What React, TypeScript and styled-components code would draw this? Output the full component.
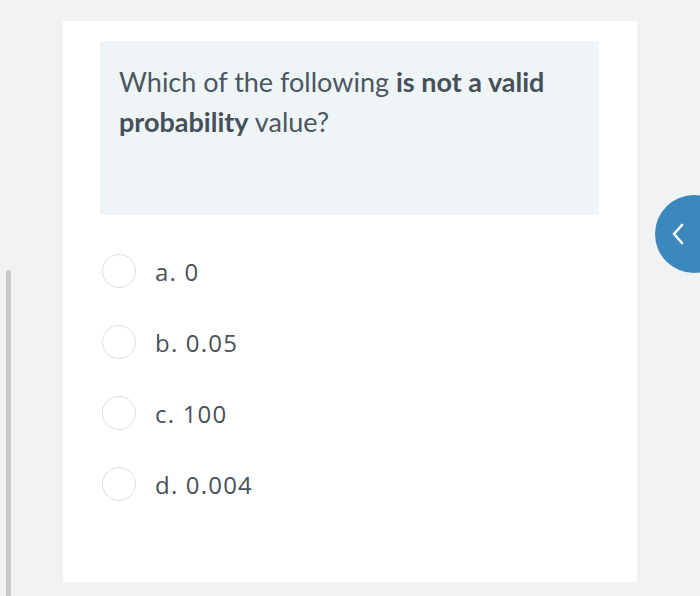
import React from 'react';
import styled, { createGlobalStyle } from 'styled-components';

const GlobalStyle = createGlobalStyle`
  html, body {
    margin: 0;
    padding: 0;
    background: #f1f2f4;
    font-family: Lato, "Open Sans", sans-serif;
  }
`;

const Page = styled.div`
  position: relative;
  width: 700px;
  height: 596px;
  overflow: hidden;
  padding: 21px 0 0 63px;
  box-sizing: border-box;
`;

const Card = styled.div`
  width: 574px;
  height: 561px;
  background: #ffffff;
  padding: 20px 38px 0 37px;
  box-sizing: border-box;
`;

const QuestionBox = styled.div`
  height: 174px;
  background: #eff4f6;
  border-radius: 4px;
  padding: 21px 19px;
  box-sizing: border-box;
  color: #4b5661;
  font-size: 27px;
  line-height: 40px;
`;

const Strong = styled.b`
  font-weight: 700;
  color: #46505b;
`;

const Options = styled.div`
  display: flex;
  flex-direction: column;
  gap: 37px;
  margin-top: 39px;
  padding-left: 2px;
`;

const Option = styled.label`
  display: flex;
  align-items: center;
  gap: 19px;
  color: #4a5159;
  font-family: "Open Sans", sans-serif;
  font-size: 24px;
  letter-spacing: 1.2px;
  cursor: pointer;
`;

const Radio = styled.span`
  width: 34px;
  height: 34px;
  border-radius: 50%;
  border: 1.5px solid #dcdee0;
  box-sizing: border-box;
  background: #fff;
  flex-shrink: 0;
`;

const SideBar = styled.div`
  position: absolute;
  left: 6px;
  top: 270px;
  bottom: 0;
  width: 5px;
  border-radius: 3px 3px 0 0;
  background: #c9c9c9;
`;

const BackButton = styled.button`
  position: absolute;
  left: 655px;
  top: 195px;
  width: 78px;
  height: 78px;
  border-radius: 50%;
  border: none;
  background: #3b88bf;
  padding: 0 0 0 16px;
  display: flex;
  align-items: center;
  cursor: pointer;
`;

const options = ['a. 0', 'b. 0.05', 'c. 100', 'd. 0.004'];

export default function App() {
  return (
    <>
      <GlobalStyle />
      <Page>
        <Card>
          <QuestionBox>
            Which of the following <Strong>is not a valid</Strong>{' '}
            <Strong>probability</Strong> value?
          </QuestionBox>
          <Options>
            {options.map((o) => (
              <Option key={o}>
                <Radio />
                {o}
              </Option>
            ))}
          </Options>
        </Card>
        <SideBar />
        <BackButton aria-label="Back">
          <svg width="14" height="22" viewBox="0 0 14 22">
            <path d="M11 2 L3 11 L11 20" fill="none" stroke="#fff" strokeWidth="2.6" strokeLinecap="round" strokeLinejoin="round" />
          </svg>
        </BackButton>
      </Page>
    </>
  );
}
